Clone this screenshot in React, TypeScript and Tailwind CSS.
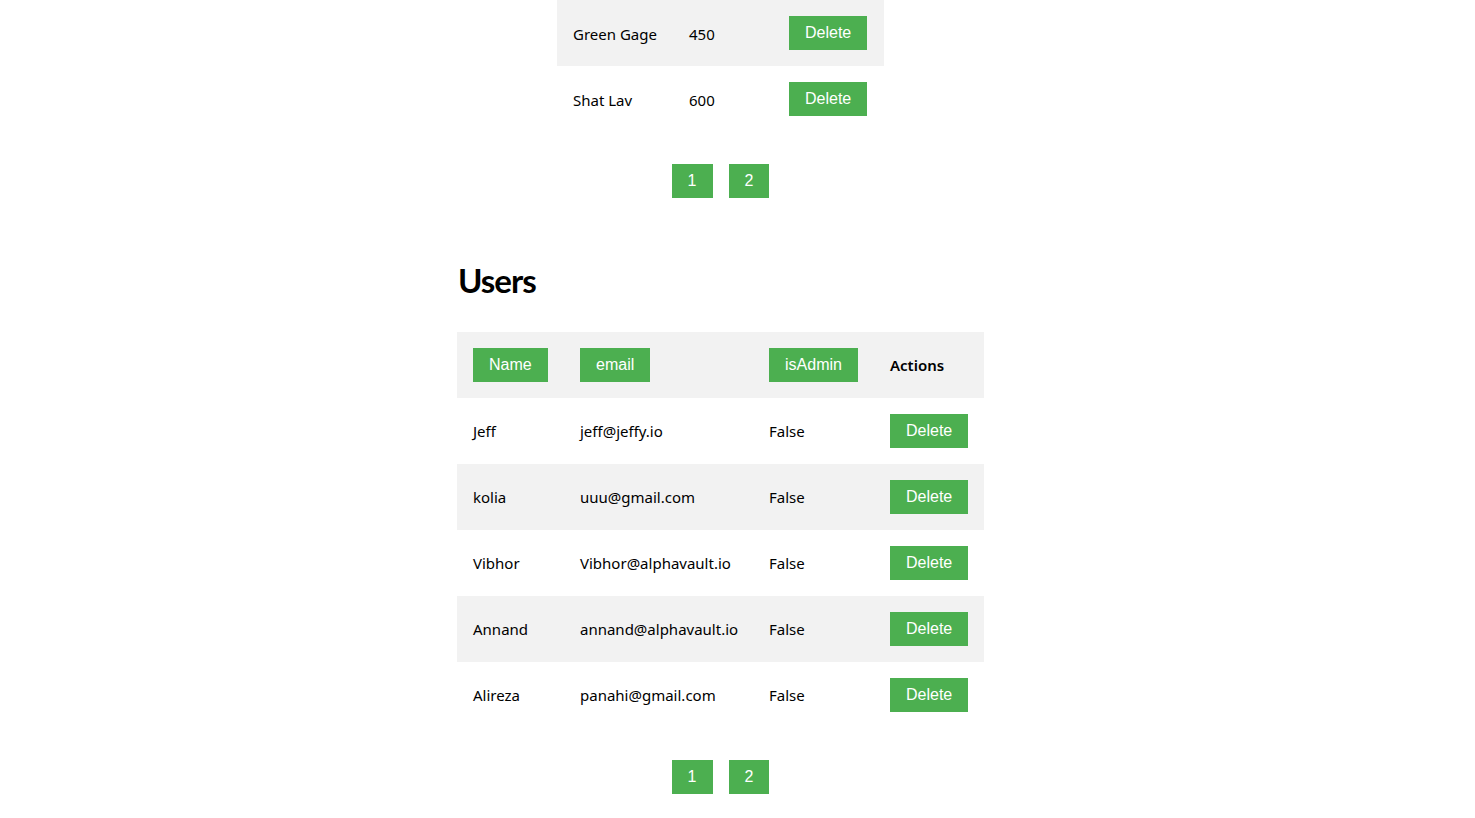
import React from "react";

const fruits = [
  { name: "Green Gage", qty: "450", bg: "bg-[#f2f2f2]" },
  { name: "Shat Lav", qty: "600", bg: "bg-white" },
];

const users = [
  { name: "Jeff", email: "jeff@jeffy.io" },
  { name: "kolia", email: "uuu@gmail.com" },
  { name: "Vibhor", email: "Vibhor@alphavault.io" },
  { name: "Annand", email: "annand@alphavault.io" },
  { name: "Alireza", email: "panahi@gmail.com" },
];

function GreenButton({ children }: { children: React.ReactNode }) {
  return (
    <button className="h-[34px] px-4 bg-[#4caf50] text-white text-[16px] leading-[34px] font-['Liberation_Sans',Arial,sans-serif]">
      {children}
    </button>
  );
}

function Pagination() {
  return (
    <div className="flex justify-center gap-4">
      <GreenButton>1</GreenButton>
      <GreenButton>2</GreenButton>
    </div>
  );
}

export default function App() {
  return (
    <div className="min-h-[818px] bg-white text-black font-['Noto_Sans',sans-serif] text-[15px]">
      <div className="w-[1441px] flex flex-col items-center">
        <table className="w-[327px] border-collapse table-fixed">
          <tbody>
            {fruits.map((f) => (
              <tr key={f.name} className={`h-[66px] ${f.bg}`}>
                <td className="w-[116px] px-4 pt-[2px] text-left whitespace-nowrap">{f.name}</td>
                <td className="w-[100px] px-4 pt-[2px] text-left whitespace-nowrap">{f.qty}</td>
                <td className="w-[111px] px-4 text-left">
                  <GreenButton>Delete</GreenButton>
                </td>
              </tr>
            ))}
          </tbody>
        </table>
        <div className="mt-8">
          <Pagination />
        </div>
        <div className="mt-[62px] w-[527px]">
          <h1 className="h-[40px] leading-[40px] text-[33px] font-bold tracking-[-1px] font-['Lato',sans-serif] pl-px">
            Users
          </h1>
          <table className="mt-8 w-[527px] border-collapse table-fixed">
            <thead>
              <tr className="h-[66px] bg-[#f2f2f2]">
                <th className="w-[107px] px-4 text-left font-normal">
                  <GreenButton>Name</GreenButton>
                </th>
                <th className="w-[189px] px-4 text-left font-normal">
                  <GreenButton>email</GreenButton>
                </th>
                <th className="w-[121px] px-4 text-left font-normal">
                  <GreenButton>isAdmin</GreenButton>
                </th>
                <th className="w-[110px] px-4 text-left font-semibold">Actions</th>
              </tr>
            </thead>
            <tbody>
              {users.map((u, i) => (
                <tr key={u.name} className={`h-[66px] ${i % 2 === 1 ? "bg-[#f2f2f2]" : "bg-white"}`}>
                  <td className="px-4 text-left whitespace-nowrap">{u.name}</td>
                  <td className="px-4 text-left whitespace-nowrap">{u.email}</td>
                  <td className="px-4 text-left whitespace-nowrap">False</td>
                  <td className="px-4 text-left">
                    <GreenButton>Delete</GreenButton>
                  </td>
                </tr>
              ))}
            </tbody>
          </table>
        </div>
        <div className="mt-8">
          <Pagination />
        </div>
      </div>
    </div>
  );
}
